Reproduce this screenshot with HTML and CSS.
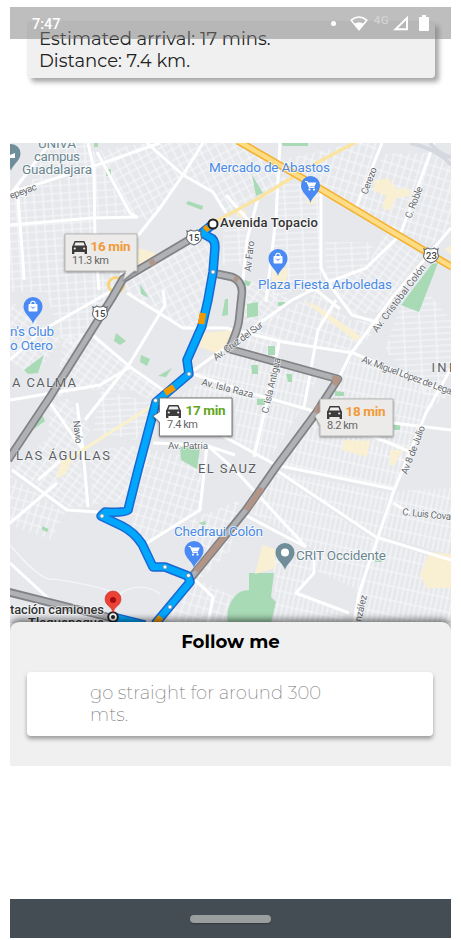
FILE: index.html
```html
<!DOCTYPE html>
<html lang="en">
<head>
<meta charset="utf-8">
<title>Follow me</title>
<link rel="stylesheet" href="styles.css">
</head>
<body>
<main class="phone">
  <header class="status">
    <span class="time">7:47</span>
    <span class="dot"></span>
    <svg class="wifi" viewBox="0 0 18 15"><path d="M1.200 4.200Q9-2.200 16.800 4.200L9 13.800Z" fill="none" stroke="#fff" stroke-width="1.500" stroke-linejoin="round"/><path d="M4.300 7.800Q9 4.700 13.700 7.800L9 14Z" fill="#fff"/></svg>
    <span class="net">4G</span>
    <svg class="signal" viewBox="0 0 16 15"><path d="M2.500 13.300H14V2Z" fill="none" stroke="#fff" stroke-width="1.900"/></svg>
    <svg class="battery" viewBox="0 0 10 16"><path d="M3 0H7V2H9Q10 2 10 3V15Q10 16 9 16H1Q0 16 0 15V3Q0 2 1 2H3Z" fill="#fff"/></svg>
  </header>

  <section class="trip">
    <p class="eta">Estimated arrival: 17 mins.</p>
    <p class="dist">Distance: 7.4 km.</p>
  </section>

  <svg class="map" viewBox="10 143 441 480">
    <defs>
      <pattern id="g0" width="9" height="15" patternUnits="userSpaceOnUse" patternTransform="rotate(-4)"><path d="M0 2H9M2 0V15M0 9H9" class="st"/></pattern>
      <pattern id="g1" width="8" height="17" patternUnits="userSpaceOnUse" patternTransform="rotate(-28)"><path d="M0 2H8M2 0V17M0 9H8" class="st"/></pattern>
      <pattern id="g2" width="7" height="10" patternUnits="userSpaceOnUse" patternTransform="rotate(17)"><path d="M0 2H7M2 0V10" class="st"/></pattern>
      <pattern id="g3" width="5" height="14" patternUnits="userSpaceOnUse" patternTransform="rotate(12)"><path d="M0 2H5M2 0V14" class="st"/></pattern>
      <pattern id="g4" width="9" height="6" patternUnits="userSpaceOnUse" patternTransform="rotate(36)"><path d="M0 2H9M2 0V6" class="st"/></pattern>
      <pattern id="g5" width="16" height="6" patternUnits="userSpaceOnUse" patternTransform="rotate(-3)"><path d="M0 2H16M2 0V6" class="st"/></pattern>
      <g id="car"><path d="M2.600 0H12.400L14.300 4.500L15 5.500V13H12.600V11H2.400V13H0V5.500L.7 4.500Z"/><path d="M3.500 1.500H11.500L12.700 4.600H2.300Z" class="carcut"/><circle cx="2.800" cy="7.500" r="1.100" class="carcut"/><circle cx="12.200" cy="7.500" r="1.100" class="carcut"/></g>
      <path id="pin" d="M0 0C-1.200-6-9.500-10-9.500-17.500A9.500 9.500 0 0 1 9.500-17.500C9.500-10 1.200-6 0 0Z"/>
      <g id="cart"><path d="M-5.500-4.500H-3.500L-1 1.500H4" fill="none" stroke="#fff" stroke-width="1.200"/><path d="M-3.200-3.500H5.800L4 .5H-1.500Z" fill="#fff"/><circle cx="-1" cy="3.600" r="1.100" fill="#fff"/><circle cx="3.500" cy="3.600" r="1.100" fill="#fff"/></g>
      <g id="bag"><rect x="-4.500" y="-3" width="9" height="7.500" rx="1" fill="#fff"/><path d="M-2.200-2V-3.500A2.200 2.200 0 0 1 2.200-3.500V-2" fill="none" stroke="#fff" stroke-width="1.100"/><path d="M-2-.5Q0 2.800 2-.5" fill="none" stroke="#4a8af4"/></g>
      <path id="shield" d="M-7-6Q-5-5-3.500-7Q0-5 3.500-7Q5-5 7-6Q6-3 7.500 1Q7 5.500 0 8Q-7 5.500-7.500 1Q-6-3-7-6Z" fill="#fff" stroke="#666b70" stroke-width="1.100"/>
    </defs>

    <rect x="10" y="143" width="441" height="480" fill="#e6e8ec"/>

    <g class="blocks">
      <path fill="url(#g0)" d="M10 195L93 170L97 280L118 262L113 292L78 350L60 338L46 292L10 292Z"/>
      <path fill="url(#g0)" d="M93 150L128 214L95 218ZM50 143H90L94 165L30 185Z"/>
      <path fill="url(#g1)" d="M100 150L148 143L183 175L150 222L130 213ZM151 143H200L184 173ZM205 143H240L280 166L276 192L226 214L214 192L184 174Z"/>
      <path fill="url(#g1)" d="M125 282L190 243L210 243L208 285L200 325L183 328L127 295Z"/>
      <path fill="url(#g5)" d="M281 175L321 193V280L270 300L276 205ZM225 215L248 225L244 265L222 265ZM325 242L375 242L366 266L326 282Z"/>
      <path fill="url(#g2)" d="M281 160L355 143H378L356 206L320 186ZM384 154L429 153L398 232L358 208ZM430 155L451 160V228L430 245L402 232Z"/>
      <path fill="url(#g4)" d="M327 284L366 268L385 232L422 256L380 311L352 315ZM248 280L292 300L270 322L242 322Z"/>
      <path fill="url(#g4)" d="M10 300L62 340L35 375L10 362ZM64 336L92 333L130 367L163 390L155 402L130 390L78 390L55 398Z"/>
      <path fill="url(#g2)" d="M245 338L262 324L316 292L350 320L385 322L353 353L283 342L275 364L245 350Z"/>
      <path fill="url(#g3)" d="M195 375L229 352L317 378L304 407L270 400ZM170 403L200 382L300 411L268 462L236 445L235 405ZM340 382L352 356L451 393L425 413L405 465L305 420Z"/>
      <path fill="url(#g3)" d="M285 452L310 420L410 460L393 490L276 467ZM276 471L390 493L376 535ZM250 500L274 472L374 540L359 590L318 572L310 547L246 510ZM396 491L451 488V555L378 535ZM360 585L378 540L451 563V623H355ZM262 550H312V570L298 592L345 615L342 623H274L275 575Z"/>
      <path fill="url(#g5)" d="M100 390L155 403L136 440L93 432ZM385 350L402 300L430 295L451 320V370L430 400Z"/>
      <path fill="url(#g4)" d="M50 405L67 398L90 430L69 461L48 440ZM10 470L50 436L80 460L88 506L67 508L12 468ZM89 450L145 445L131 500L92 505Z"/>
      <path fill="url(#g2)" d="M145 448L207 460L200 508L148 542L133 530L130 512ZM10 475L65 512L52 540L10 525ZM190 520L240 500L230 550L200 580L240 600V623H165L190 580Z"/>
    </g>

    <g class="park">
      <path d="M186 204L188 201L203 206L202 210ZM252 175L263 193L256 196ZM281 143H308V146H283ZM94 143H98V147H94ZM107 169H111V176H106ZM140 284L149 298L141 294ZM225 299H228V315L222 316ZM24 370L44 355L38 373L28 374ZM116 333L126 341L120 345L114 341ZM141 355L150 359L147 366L140 362ZM158 376L172 368L166 377ZM34 418L42 414L45 421L34 429ZM180 447L200 448L197 469L181 460ZM432 264L438 263L419 312L401 305ZM247 304L258 302V316L247 318ZM268 346H275V355H268ZM251 365H258V374H252ZM286 374H292V382H288ZM335 391L344 392V396H335ZM257 399H265V405H257ZM393 423H400V430H394ZM42 526L49 529L47 532L42 530ZM198 523L206 521L205 526Z"/>
      <path d="M249 573H274L271 597L276 602L271 623H228Q225 608 235 596Q240 590 249 590Z"/>
      <path d="M245 280L251 282L249 286L244 285ZM278 302H285V306H278ZM375 559H382V562H375Z"/>
    </g>
    <g class="shop">
      <path d="M139 248L155 253L158 260L136 270ZM307 196H315V204H307ZM274 267L288 269L285 288L271 290ZM374 181L388 178L397 189L408 188L411 196L396 198L390 211L382 207L386 196L373 190ZM200 333L235 330L229 347L218 354L200 347ZM304 301L316 305L362 337L355 341ZM344 440L370 441L367 457L342 450ZM390 450H402L395 465H390ZM262 545L275 549V568L255 574ZM430 552L451 554V588H427L420 575ZM237 208L247 212L244 218L236 216ZM62 460L75 455L65 475L55 478ZM445 249L451 245V255Z"/>
    </g>

    <g class="road">
      <path d="M88 143L94 170L95 240L99 290M10 225L92 218L138 217M10 193L97 165L160 143M97 152L130 213L138 218M147 143L183 175L213 192L226 213M203 143L183 175L160 208L133 242L121 275M17 185L23 262L24 280M50 143L10 195M280 143L276 218L266 302M321 190V268L330 285L352 315L380 323M382 143L356 208M434 143L400 235L366 268L326 283L292 300L190 373M226 195L250 222M258 198L247 240L243 280"/>
      <path d="M451 228L392 298L350 355L338 380M163 290L165 305L130 363L85 420M127 293L183 328L226 328L283 342L353 353L460 397M90 333L130 367L163 390M190 373L250 393L310 410L413 453M113 290L43 330L10 360M50 403L83 450L88 507M153 443L205 445L235 455M223 436L276 465L393 489M207 445L235 470L306 547M276 470L376 537L451 560M453 365L426 413L393 493L359 593L354 623M336 300L318 330L304 407M279 342L272 380L254 457M306 290L316 290L340 309M393 423L451 430M393 503L410 513M77 403L83 450"/>
      <path d="M12 470L67 510L98 512M57 483L10 523M10 563L50 600L85 610M207 445L200 510L147 543M192 577L213 597L208 623M314 553V573L296 593L349 613M245 515L306 547M10 400L100 385L130 367M38 480L60 461"/>
    </g>
    <path d="M10 545Q42 583 54 579Q90 584 120 594Q140 580 160 594" class="thin"/>
    <path d="M155 404L67 460" stroke="#fbf2cc" stroke-width="3"/>
    <path d="M430 143Q440 155 451 157M410 143Q440 150 451 165" stroke="#d5d9df" stroke-width="4" fill="none"/>

    <g fill="none">
      <path d="M356 142L309 167L259 198L213 223" stroke="#fbe3a0" stroke-width="3.500"/>
      <path d="M238 141L309 182L386 228L452 267" stroke="#f4b02e" stroke-width="7.500"/>
      <path d="M238 141L309 182L386 228L452 267" stroke="#fddc83" stroke-width="4.500"/>
      <circle cx="116" cy="285" r="7.500" stroke="#f8d477" stroke-width="3"/>
    </g>

    <g class="alt">
      <path d="M194 237L123 279L112 298L50 397L8 460M213 273L232 277Q242 281 242 292L239 320Q238 330 229 349L338 379L316 413L276 467L246 510L190 579M8 592L112 618"/>
      <path class="core" d="M194 237L123 279L112 298L50 397L8 460M213 273L232 277Q242 281 242 292L239 320Q238 330 229 349L338 379L316 413L276 467L246 510L190 579M8 592L112 618"/>
      <path class="slow" d="M155 261L150 264M238 280L234 278M332 378L338 379L334 385M320 405L316 413M262 488L246 510M225 536L196 571"/>
    </g>

    <g class="route">
      <path class="edge" d="M213 224L202 233L209 237Q215 239 215 247L213 272L208 300L202 326L187 360L189 374L156 402L138 470L128 510Q125 513 105 512L101 516L122 526Q134 532 142 544L153 567H165L188 576L190 582L155 624M113 617L145 625"/>
      <path class="fill" d="M213 224L202 233L209 237Q215 239 215 247L213 272L208 300L202 326L187 360L189 374L156 402L138 470L128 510Q125 513 105 512L101 516L122 526Q134 532 142 544L153 567H165L188 576L190 582L155 624M113 617L145 625"/>
      <path class="jam" d="M208 227L205 230M203 313L201 324M174 387L165 393M161 617L156 623"/>
      <g fill="#fff" stroke="#6d8496" stroke-width=".7"><circle cx="213" cy="272" r="2"/><circle cx="189" cy="374" r="2"/><circle cx="155.500" cy="400.500" r="2"/><circle cx="102" cy="516" r="2"/><circle cx="165" cy="567" r="2"/><circle cx="188.500" cy="575.500" r="2"/><circle cx="170" cy="607" r="2"/></g>
    </g>
    <circle cx="213" cy="224" r="4.500" fill="#fff" stroke="#222" stroke-width="2"/>
    <circle cx="113" cy="617" r="4.800" fill="#fff" stroke="#222" stroke-width="2"/><circle cx="113" cy="617" r="2" fill="#222"/>

    <use href="#shield" x="194" y="237"/><use href="#shield" x="100" y="313"/><use href="#shield" x="431" y="255"/>
    <g class="num"><text x="194" y="240.500">15</text><text x="100" y="316.500">15</text><text x="431.500" y="258.500">23</text></g>

    <g fill="#4a8af4"><use href="#pin" x="310.500" y="203"/><use href="#pin" x="278" y="276"/><use href="#pin" x="33" y="324"/><use href="#pin" x="194" y="568"/></g>
    <use href="#cart" x="310.500" y="186"/><use href="#bag" x="278" y="259"/><use href="#bag" x="33" y="307"/><use href="#cart" x="194" y="551"/>
    <g fill="#708e99"><use href="#pin" x="285" y="570"/><use href="#pin" x="11" y="171"/></g>
    <circle cx="285" cy="552.500" r="4" fill="#fff"/><path d="M10 155L15 153V158H10" fill="#fff"/>
    <path d="M113 613C112 606 105 606 105 599A8 8 0 0 1 121 599C121 606 114 606 113 613Z" fill="#ea4335" stroke="#c5221f" stroke-width=".5"/><circle cx="113" cy="600" r="3" fill="#a50e0e"/>

    <g class="poi">
      <text x="209" y="172" textLength="121">Mercado de Abastos</text>
      <text x="258" y="288.500" textLength="134">Plaza Fiesta Arboledas</text>
      <text x="10" y="336" textLength="44">n's Club</text>
      <text x="10" y="350" textLength="43">o Otero</text>
      <text x="174" y="536" textLength="89">Chedraui Colón</text>
    </g>
    <g class="poi slate">
      <text x="38" y="148" textLength="38">UNIVA</text>
      <text x="34" y="161" textLength="46">campus</text>
      <text x="22" y="174" textLength="70">Guadalajara</text>
      <text x="296" y="560" textLength="90">CRIT Occidente</text>
    </g>
    <g class="area">
      <text x="12" y="387" textLength="64">A CALMA</text>
      <text x="16" y="460" textLength="94">LAS ÁGUILAS</text>
      <text x="198" y="472.500" textLength="58">EL SAUZ</text>
      <text x="431.500" y="372" textLength="26">IND</text>
    </g>
    <g class="street">
      <text transform="translate(11 199) rotate(-20)" textLength="28">epeyac</text>
      <text transform="translate(367 195) rotate(-69)" textLength="28">Cerezo</text>
      <text transform="translate(411 219) rotate(-69)" textLength="33">C. Roble</text>
      <text transform="translate(251 272) rotate(-84)" textLength="31">Av Faro</text>
      <text transform="translate(377 333) rotate(-53)" textLength="82">Av. Cristóbal Colón</text>
      <text transform="translate(216 361) rotate(-36)" textLength="59">Av. Cruz del Sur</text>
      <text transform="translate(201 385) rotate(14)" textLength="53">Av. Isla Raza</text>
      <text transform="translate(268 414) rotate(-77)" textLength="57">C. Isla Antigua</text>
      <text transform="translate(361 362) rotate(20)" textLength="106">Av. Miguel López de Legazpi</text>
      <text transform="translate(407 475) rotate(-69)" textLength="51">Av 8 de Julio</text>
      <text transform="translate(402 515) rotate(6)" textLength="49">C. Luis Cova</text>
      <text transform="translate(73 421) rotate(83)" textLength="23">Navío</text>
      <text x="168" y="449" textLength="40">Av. Patria</text>
      <text transform="translate(361 622) rotate(-77)" textLength="27">nzález</text>
    </g>
    <g class="place">
      <text x="220" y="227" textLength="98">Avenida Topacio</text>
      <text x="10" y="613.500" textLength="94">tación camiones</text>
      <text x="28" y="627" textLength="76">Tlaquepaque</text>
    </g>

    <g class="callout gray">
      <path d="M65 234H137V271H134L123 280L126 271H65Z"/>
      <use href="#car" x="72" y="241"/><text class="time orange" x="90.500" y="250.500" textLength="40">16 min</text><text class="km" x="72" y="263.500" textLength="37">11.3 km</text>
    </g>
    <g class="callout">
      <path d="M159.500 398H232V436H159.500V422L153 416L159.500 412Z"/>
      <use href="#car" x="166" y="405"/><text class="time green" x="185.500" y="415" textLength="40">17 min</text><text class="km" x="167" y="427.500" textLength="31">7.4 km</text>
    </g>
    <g class="callout gray">
      <path d="M320 399H393V436H320V425L315 416L320 412Z"/>
      <use href="#car" x="327" y="406"/><text class="time orange" x="345.500" y="416" textLength="40">18 min</text><text class="km" x="327" y="428.500" textLength="31">8.2 km</text>
    </g>
  </svg>

  <section class="sheet">
    <h1>Follow me</h1>
    <div class="step"><p>go straight for around 300<br>mts.</p></div>
  </section>

  <footer class="nav"><span class="handle"></span></footer>
</main>
</body>
</html>
```
FILE: styles.css
```css
* { box-sizing: border-box; }
body { margin: 0; background: #fff; }
p, h1 { margin: 0; }
.phone {
  position: relative;
  display: flex;
  flex-direction: column;
  width: 441px;
  height: 931px;
  margin: 7px 10px 0;
  font-family: Montserrat, Inter, sans-serif;
}
.status {
  position: absolute;
  inset: 0 0 auto;
  z-index: 2;
  height: 32px;
  display: flex;
  align-items: center;
  padding: 0 22px;
  background: rgba(128, 128, 128, .51);
  color: #fff;
  font-family: Roboto, sans-serif;
}
.time { font-size: 14.5px; font-weight: 500; }
.status .time { padding-top: 2px; }
.dot { width: 5px; height: 5px; border-radius: 50%; background: #fff; margin-left: auto; margin-right: 14px; }
.wifi { width: 18px; height: 15px; margin-right: 6px; }
.net { color: #d2d2d2; font-size: 11.5px; font-weight: 500; margin: -6px 4px 0 0; letter-spacing: .5px; }
.signal { width: 16px; height: 15px; margin-right: 10px; }
.battery { width: 10px; height: 16px; }
.trip {
  flex: none;
  width: 408px;
  height: 57px;
  margin: 14px 0 65px 17px;
  padding: 7px 12px;
  background: #f0f0f0;
  border-radius: 4px;
  box-shadow: 4px 4px 5px rgba(0, 0, 0, .35);
  font-size: 18px;
  line-height: 22px;
  color: #222;
  white-space: nowrap;
}
.eta { letter-spacing: .03px; }
.map { display: block; flex: none; width: 441px; height: 480px; font-family: Roboto, sans-serif; }
.sheet {
  position: relative;
  flex: none;
  height: 144px;
  margin-top: -1px;
  padding: 8px 17px 0;
  background: #f0f0f0;
  border-radius: 9px 9px 0 0;
  box-shadow: 0 -3px 6px rgba(0, 0, 0, .5);
  clip-path: inset(-12px 0 0 0);
}
h1 { font-size: 18.2px; line-height: 24px; height: 23px; font-weight: 700; text-align: center; color: #000; }
.step {
  width: 406px;
  height: 64px;
  margin-top: 19px;
  padding: 10px 0 0 63px;
  background: #fff;
  border-radius: 4px;
  box-shadow: 0 3px 4px rgba(0, 0, 0, .35);
  font-size: 18px;
  line-height: 22px;
  font-weight: 200;
  color: #777;
}
.nav {
  height: 39px;
  margin-top: auto;
  display: flex;
  align-items: center;
  justify-content: center;
  background: #444d53;
}
.handle { width: 81px; height: 8px; border-radius: 4px; background: #9b9e9e; box-shadow: 0 1px 1px #333a3e; }

.st { fill: none; stroke: #f6f7f9; stroke-width: 1.1; }
.road { fill: none; stroke: #fff; stroke-width: 3; stroke-linejoin: round; }
.thin { fill: none; stroke: #f6f7f9; stroke-width: 1.2; }
.park { fill: #a8dab5; }
.shop { fill: #fbf0cf; opacity: .9; }
.alt { fill: none; stroke: #808285; stroke-width: 8.5; stroke-linejoin: round; }
.alt .core { stroke: #afb1b4; stroke-width: 5; }
.alt .slow { stroke: #b39587; stroke-width: 5.5; }
.route { fill: none; stroke-linejoin: round; }
.edge { stroke: #1967d2; stroke-width: 9.5; }
.fill { stroke: #00a7fd; stroke-width: 6.5; }
.jam { stroke: #f29900; stroke-width: 6.5; }
.num { font-size: 9.5px; font-weight: 500; fill: #444; text-anchor: middle; }
.poi, .area, .street, .place { paint-order: stroke; stroke: rgba(255, 255, 255, .65); stroke-width: 2px; stroke-linejoin: round; }
.poi { font-size: 13.5px; fill: #4a8ae6; }
.slate { fill: #6a868f; }
.area { font-size: 13px; fill: #5c5f63; stroke-width: 1px; }
.street { font-size: 9.8px; fill: #65696e; stroke-width: 1.5px; }
.place { font-size: 13px; font-weight: 500; fill: #333; }
.callout path { fill: #fff; stroke: #777; }
.callout > path { filter: drop-shadow(0 1px 1px rgba(0, 0, 0, .4)); }
.callout.gray > path { fill: #ecebe9; stroke: #b9b9b7; }
.callout .time { font-size: 13.5px; font-weight: 700; }
.km { font-size: 11px; fill: #666; }
.orange { fill: #f29a38; }
.green { fill: #63a51e; }
#car path, #car circle { stroke: none; }
#car path:first-child { fill: #3c3c3c; }
#car .carcut { fill: #f0f0f0; }
```
